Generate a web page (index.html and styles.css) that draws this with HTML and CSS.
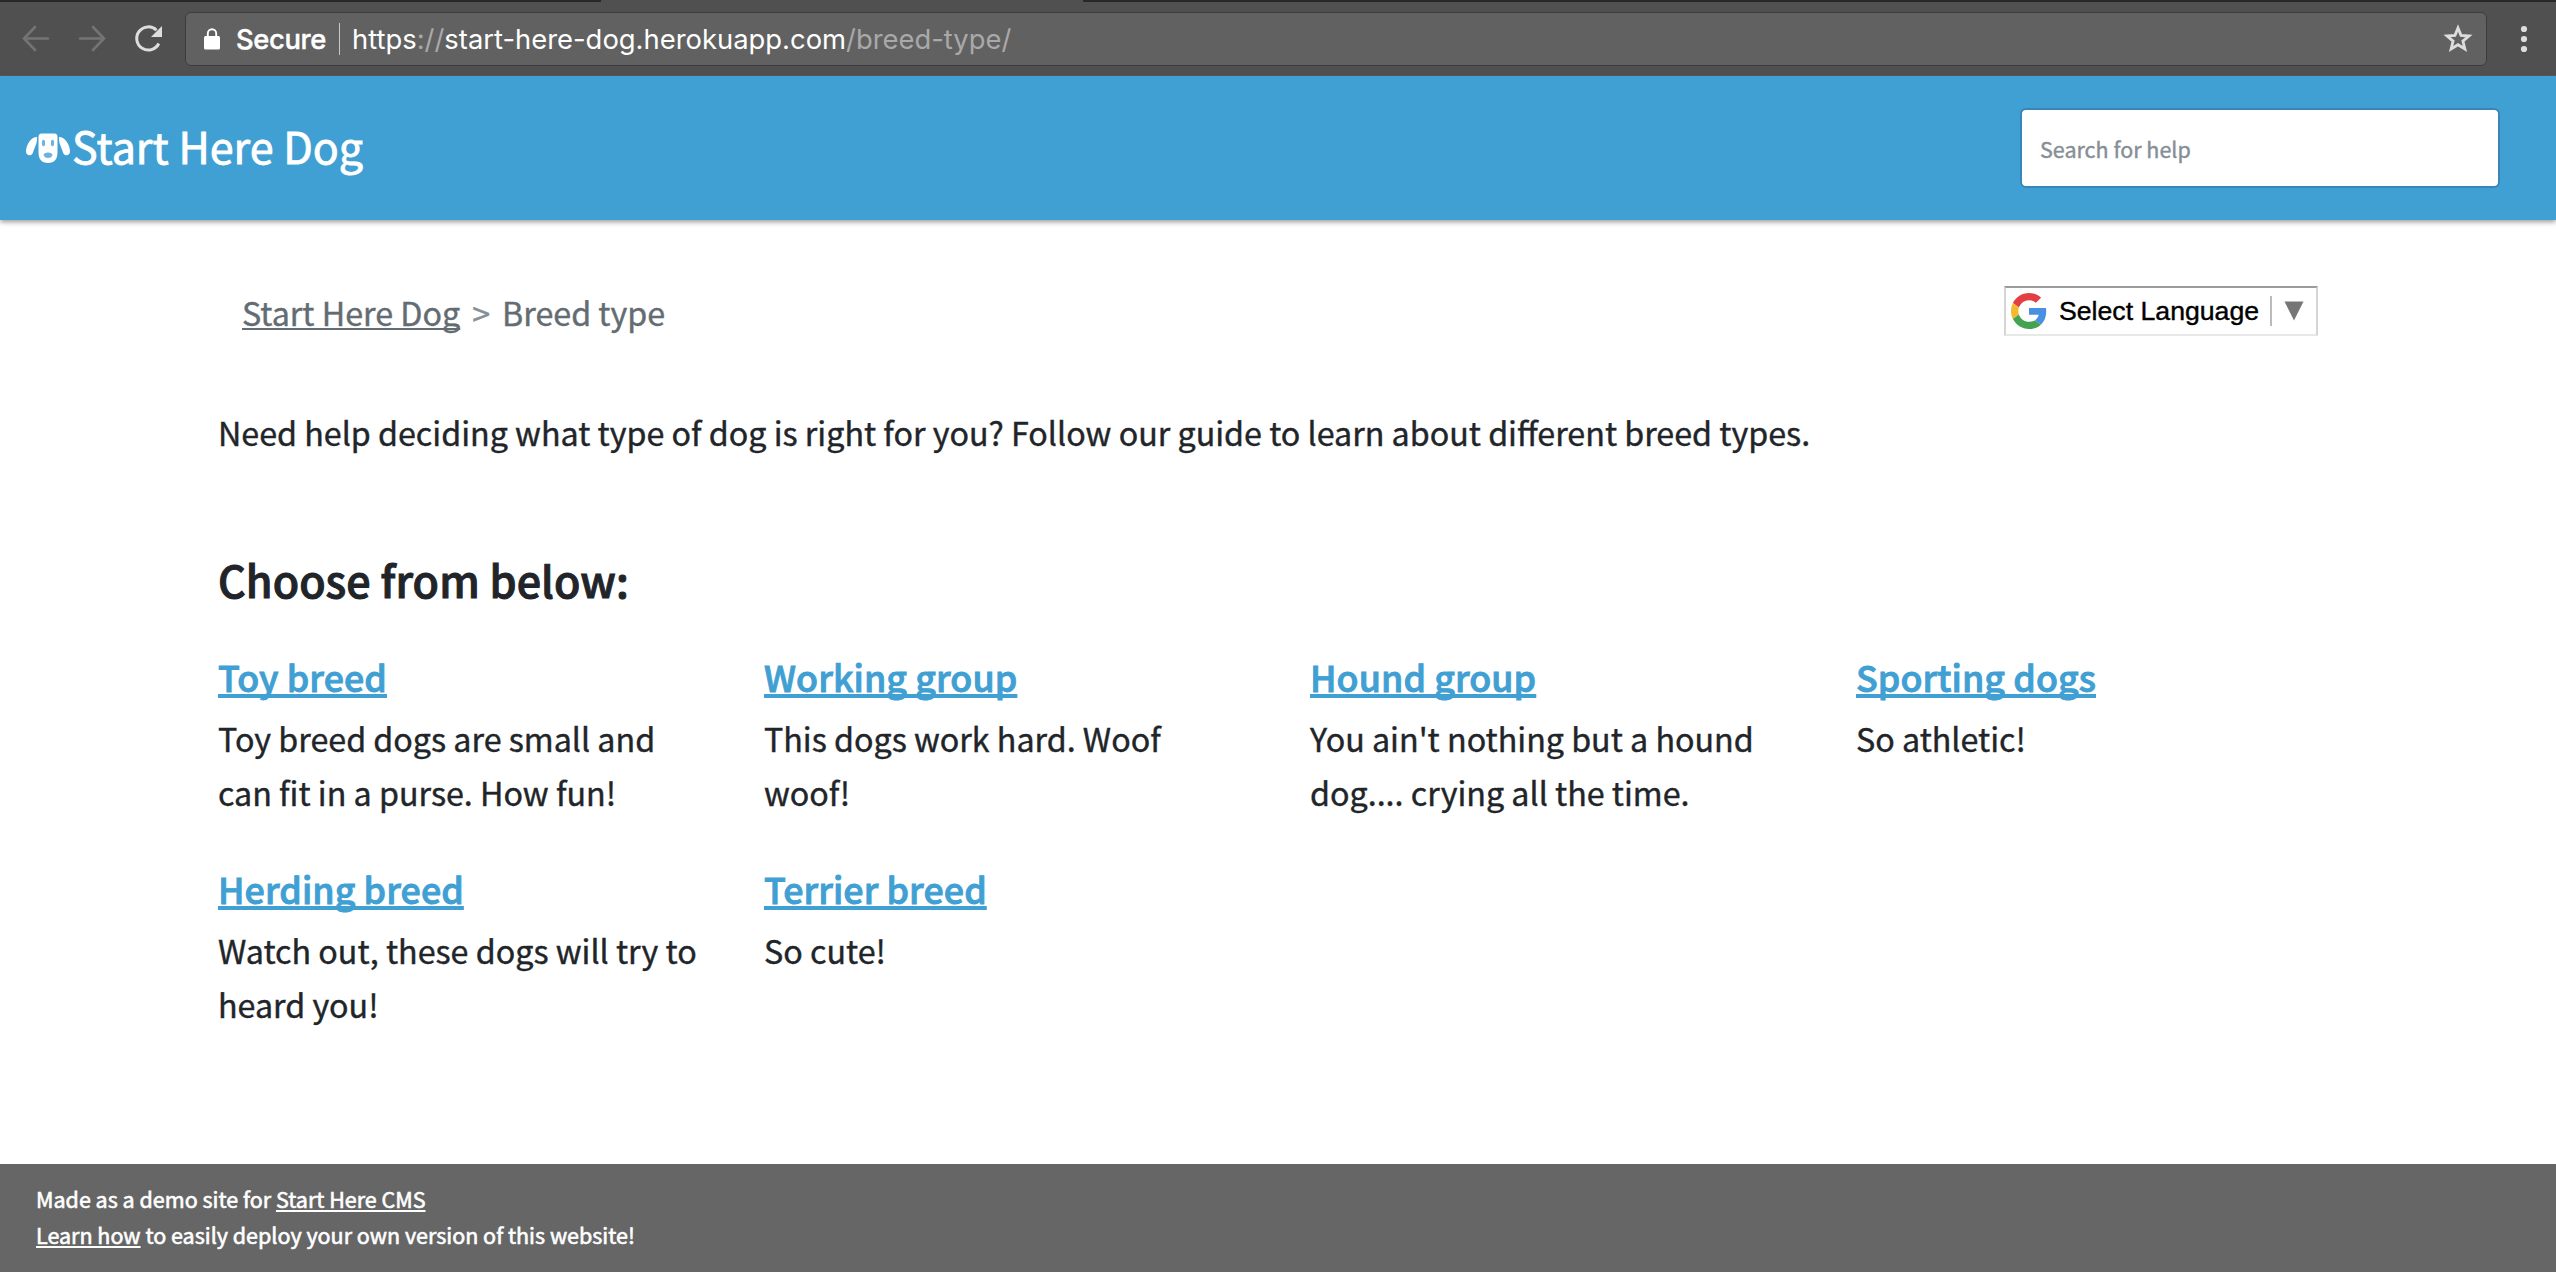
FILE: index.html
```html
<!DOCTYPE html>
<html lang="en">
<head>
<meta charset="utf-8">
<title>Breed type - Start Here Dog</title>
<link rel="stylesheet" href="styles.css">
</head>
<body>
<div class="browser">
  <div class="tabs"><span class="tab-left"></span><span class="tab-active"></span><span class="tab-right"></span></div>
  <div class="toolbar">
    <svg class="nav" width="160" height="30" viewBox="0 0 160 30" fill="none">
      <path class="arrow" d="M26 14.500H2.500M13 3L2 14.500L13 26M58 14.500H81.500M71 3L82 14.500L71 26"/>
      <path class="reload" d="M136.800 19.500A11.600 11.600 0 1 1 134.500 6.200"/>
      <path class="reload-tip" d="M140 2V13H129Z"/>
    </svg>
    <div class="address">
      <svg class="lock" width="18" height="22" viewBox="0 0 18 22"><rect x="1" y="8" width="16" height="13.500" rx="1.500" fill="#fff"/><path d="M4.800 9V5.500a4.200 4.200 0 0 1 8.400 0V9" fill="none" stroke="#fff" stroke-width="1.900"/></svg>
      <span class="secure">Secure</span>
      <span class="rule"></span>
      <span class="url">https<i>://</i>start-here-dog.herokuapp.com<i>/breed-type/</i></span>
      <svg class="star" width="30" height="30" viewBox="0 0 30 30"><path d="M15 4L18 11.400L26 12L19.900 17.100L21.900 25L15 20.700L8.100 25L10.100 17.100L4 12L12 11.400Z" fill="none" stroke="#ddd" stroke-width="2.800"/></svg>
    </div>
    <svg class="dots" width="8" height="28" viewBox="0 0 8 28" fill="#ddd"><circle cx="4" cy="4" r="3.100"/><circle cx="4" cy="14" r="3.100"/><circle cx="4" cy="24" r="3.100"/></svg>
  </div>
</div>
<header class="header">
  <a class="brand">
    <svg class="dog" width="44" height="30" viewBox="0 0 44 30">
      <path fill="#fff" d="M11 4C5 4 0 12 0 18.500C0 23 5.500 23.500 6.800 20C8 15.500 11 11 11 7ZM33 4C39 4 44 12 44 18.500C44 23 38.500 23.500 37.200 20C36 15.500 33 11 33 7Z"/>
      <path fill="#fff" d="M15.500 .500H28.500Q31.500 .500 31.500 4V19Q31.500 30 22 30Q12.500 30 12.500 19V4Q12.500 .500 15.500 .500Z"/>
      <g fill="#6bb5dd"><ellipse cx="17.500" cy="10" rx="1.600" ry="3.200"/><ellipse cx="26.500" cy="10" rx="1.600" ry="3.200"/>
      <path d="M17.500 22Q18 19.500 22 19.500Q26 19.500 26.500 22Q25.500 25 22 25Q18.500 25 17.500 22Z"/></g>
    </svg>
    <span class="brand-name">Start Here Dog</span>
  </a>
  <input class="search" type="text" placeholder="Search for help">
</header>
<main class="main">
  <div class="top-row">
    <nav class="breadcrumb"><a class="crumb-link">Start Here Dog</a><span class="sep">&gt;</span><span>Breed type</span></nav>
    <div class="translate">
      <svg class="google" width="36" height="36" viewBox="0 0 48 48"><path fill="#e33e41" d="M24 9.500c3.540 0 6.710 1.220 9.210 3.600l6.850-6.850C35.900 2.380 30.470 0 24 0 14.620 0 6.510 5.380 2.560 13.220l7.980 6.190C12.430 13.720 17.740 9.500 24 9.500z"/><path fill="#4a90e2" d="M46.980 24.550c0-1.570-.150-3.090-.380-4.550H24v9.020h12.940c-.580 2.960-2.260 5.480-4.780 7.180l7.730 6c4.510-4.180 7.090-10.360 7.090-17.650z"/><path fill="#f4b92e" d="M10.530 28.590c-.480-1.450-.760-2.990-.760-4.590s.270-3.140.760-4.590l-7.980-6.190C.920 16.460 0 20.120 0 24s.920 7.540 2.560 10.780l7.970-6.190z"/><path fill="#43a352" d="M24 48c6.480 0 11.930-2.130 15.890-5.810l-7.730-6c-2.150 1.450-4.920 2.300-8.160 2.300-6.260 0-11.570-4.220-13.470-9.910l-7.980 6.190C6.510 42.620 14.620 48 24 48z"/></svg>
      <span class="translate-text">Select Language</span>
      <span class="translate-rule"></span>
      <svg class="caret" width="20" height="20" viewBox="0 0 20 20"><path d="M.500 .500H19.500L10 19.500Z" fill="#767676"/></svg>
    </div>
  </div>
  <p class="intro">Need help deciding what type of dog is right for you? Follow our guide to learn about different breed types.</p>
  <h2 class="choose">Choose from below:</h2>
  <div class="grid">
    <section class="item"><h3><a>Toy breed</a></h3><p>Toy breed dogs are small and can fit in a purse. How fun!</p></section>
    <section class="item"><h3><a>Working group</a></h3><p>This dogs work hard. Woof woof!</p></section>
    <section class="item"><h3><a>Hound group</a></h3><p>You ain't nothing but a hound dog.... crying all the time.</p></section>
    <section class="item"><h3><a>Sporting dogs</a></h3><p>So athletic!</p></section>
    <section class="item"><h3><a>Herding breed</a></h3><p>Watch out, these dogs will try to heard you!</p></section>
    <section class="item"><h3><a>Terrier breed</a></h3><p>So cute!</p></section>
  </div>
</main>
<footer class="footer">
  <p>Made as a demo site for <a>Start Here CMS</a></p>
  <p><a>Learn how</a> to easily deploy your own version of this website!</p>
</footer>
</body>
</html>
```
FILE: styles.css
```css
* { box-sizing: border-box; }
body {
  margin: 0;
  background: #fff;
  color: #212529;
  font: 32.24px/54px "Noto Sans CJK SC", sans-serif;
  -webkit-text-stroke: .4px;
}
h2, h3, p { margin: 0; }
svg { display: block; flex: none; }

.browser { height: 76px; background: #505050; border-bottom: 1px solid #5c5c5c; }
.tabs { display: flex; height: 2px; }
.tab-left { width: 601px; background: #282828; }
.tab-active { width: 482px; }
.tab-right { flex: 1; background: #282828; }
.toolbar { display: flex; align-items: center; height: 73px; padding-left: 22px; }
.nav { margin: 0 3px 0 0; }
.arrow { stroke: #747474; stroke-width: 2.6; stroke-linecap: round; }
.reload { stroke: #ddd; stroke-width: 3; }
.reload-tip { fill: #ddd; }
.address {
  display: flex;
  align-items: center;
  width: 2302px;
  height: 54px;
  padding: 0 13px 0 17px;
  background: #616161;
  border: 1px solid #3c3c3c;
  border-radius: 6px;
  color: #fff;
  font: 27.4px/50px Inter, sans-serif;
  -webkit-text-stroke: 0;
}
.lock { margin-right: 15px; }
.secure { width: 103px; font-weight: 500; letter-spacing: -.4px; -webkit-text-stroke: .4px; }
.rule { width: 1px; height: 32px; margin-right: 12px; background: #c8c8c8; }
.url i { font-style: normal; color: #a9a9a9; }
.star { margin-left: auto; }
.dots { margin-left: 33px; }

.header {
  display: flex;
  align-items: center;
  justify-content: space-between;
  height: 144px;
  padding: 0 56px 0 26px;
  background: #409fd3;
  box-shadow: 0 2px 5px rgba(0, 0, 0, .4);
}
.brand { display: flex; align-items: center; color: #fff; }
.brand-name { margin-left: 2px; padding-bottom: 7px; font-size: 43px; line-height: 60px; -webkit-text-stroke: .8px; }
.search {
  width: 480px;
  height: 80px;
  padding: 0 18px;
  border: 2px solid #3687b5;
  border-radius: 6px;
  background: #fff;
  font: 21.5px/36px "Noto Sans CJK SC", sans-serif;
  -webkit-text-stroke: .4px;
}
.search::placeholder { color: #868e96; opacity: 1; }

.main { height: 944px; padding: 66px 153px 0 218px; }
.top-row {
  display: flex;
  justify-content: space-between;
  height: 50px;
  margin-bottom: 69px;
  padding: 0 85px 0 24px;
}
.breadcrumb { display: flex; gap: 12px; height: 50px; line-height: 52px; color: #636c72; }
.sep { color: #868e96; }
.crumb-link { text-decoration: underline 2px; text-underline-offset: 2px; text-decoration-skip-ink: none; }
.translate {
  display: flex;
  align-items: center;
  width: 314px;
  padding-left: 5px;
  border: 2px solid #d5d5d5;
  border-top-color: #9b9b9b;
  border-bottom-color: #e8e8e8;
  color: #000;
  font: 26.67px/46px "Liberation Sans", sans-serif;
}
.translate-text { margin-left: 12px; width: 211px; }
.translate-rule { width: 2px; height: 30px; margin-right: 12px; background: #bbb; }
.intro { height: 54px; margin-bottom: 94px; }
.choose { margin-bottom: 48px; font-size: 43px; font-weight: 500; line-height: 52px; letter-spacing: .08px; -webkit-text-stroke: 1px; }
.grid { display: grid; grid-template-columns: repeat(4, 546px); row-gap: 46px; }
.item { padding-right: 60px; }
.item h3 { margin-bottom: 11px; font-size: 35.8px; font-weight: 500; line-height: 47px; letter-spacing: .08px; -webkit-text-stroke: .9px; }
.item a { color: #409fd3; text-decoration: underline 4px; text-underline-offset: 2px; text-decoration-skip-ink: none; }

.footer { height: 108px; padding: 17px 36px 0; background: #666; color: #fff; font-size: 21.5px; line-height: 36px; -webkit-text-stroke: .6px; }
.footer a { text-decoration: underline 2px; text-underline-offset: 2px; text-decoration-skip-ink: none; }
```
